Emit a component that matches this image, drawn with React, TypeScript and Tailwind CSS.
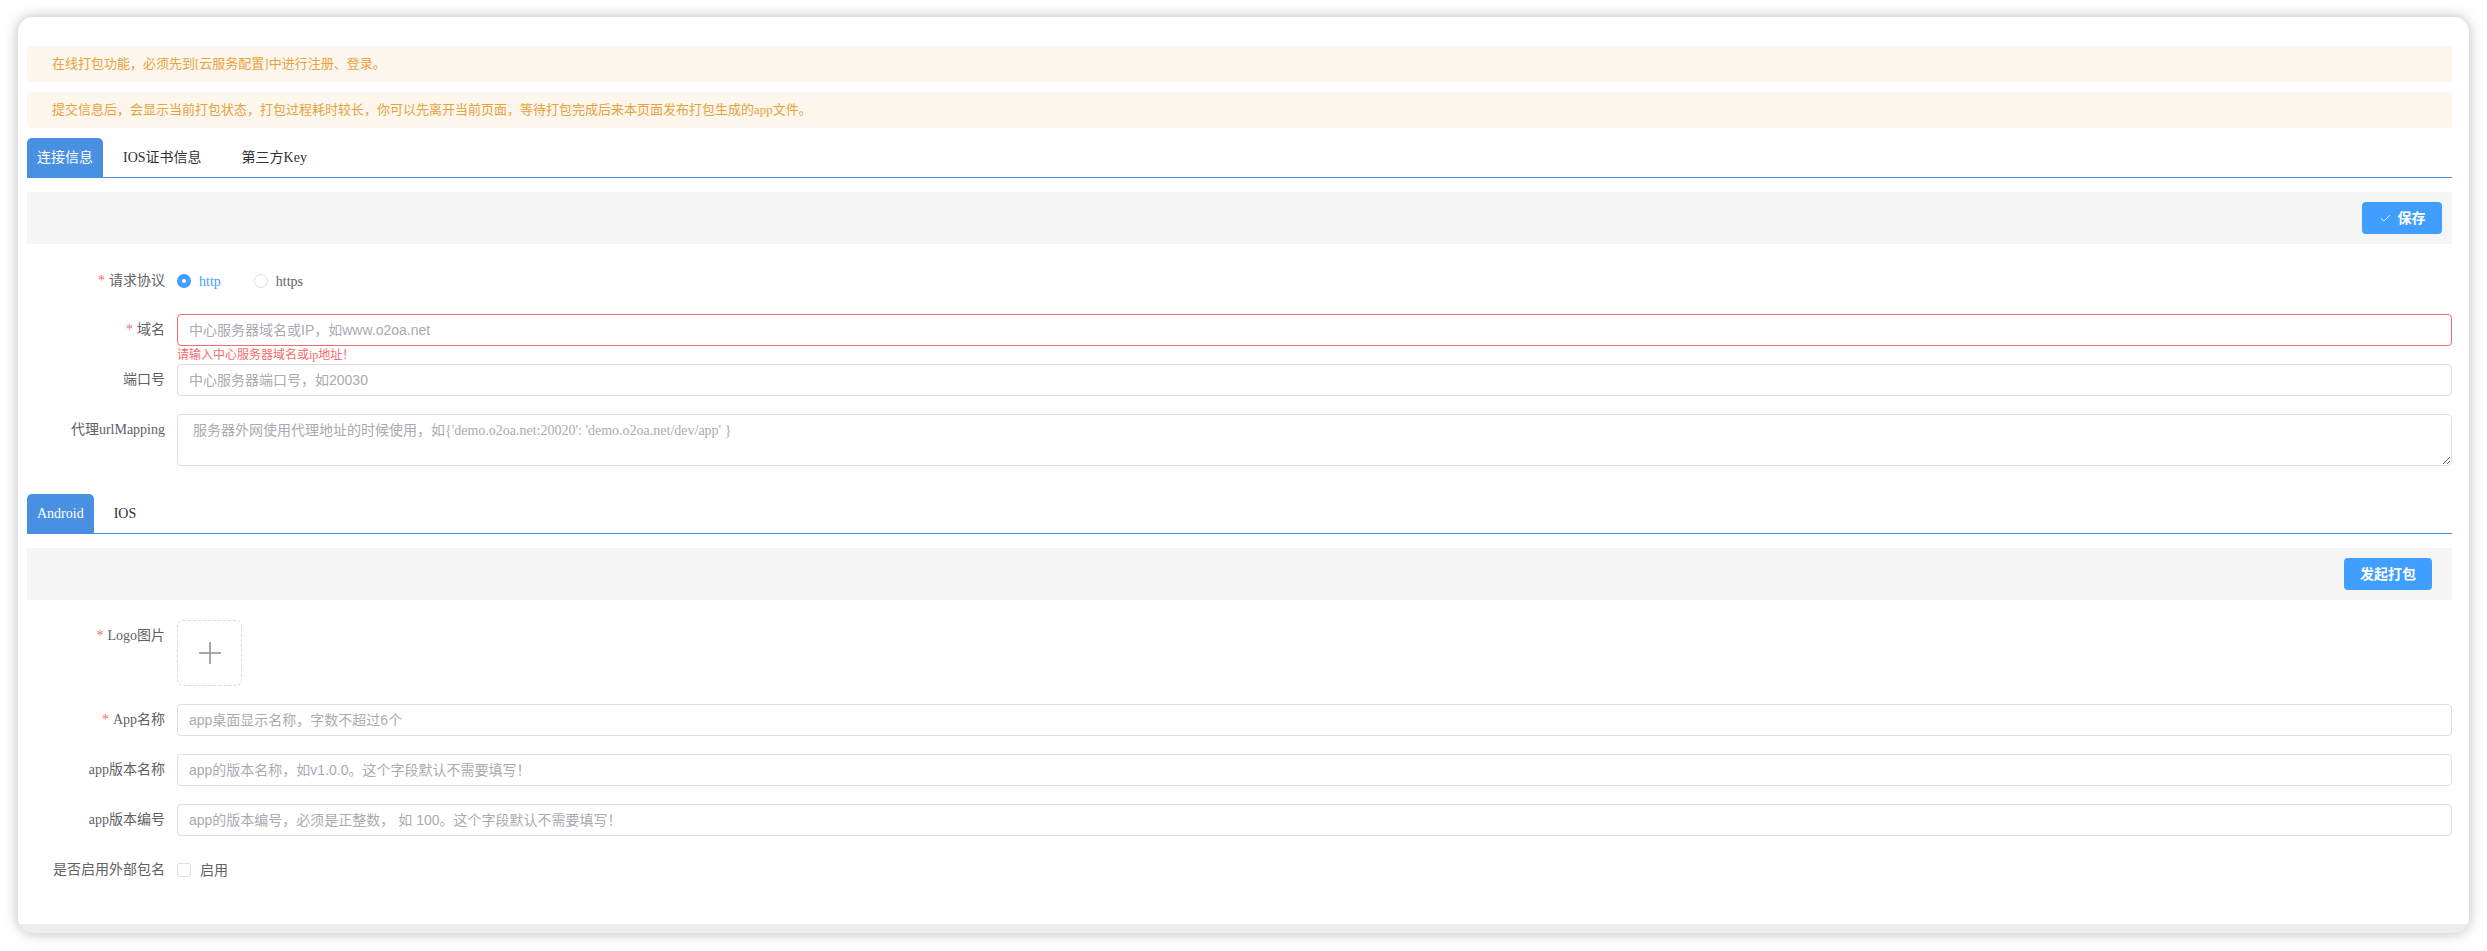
import { Check } from "lucide-react"

const serif = "font-['Liberation_Serif','Noto_Sans_CJK_SC',serif]"
const sans = "font-['Liberation_Sans','Noto_Sans_CJK_SC',sans-serif]"

function Label({ text, required }: { text: string; required?: boolean }) {
  return (
    <div className={`w-[150px] shrink-0 pr-[12px] text-right text-[14px] leading-[32px] text-[#606266] ${serif}`}>
      {required && <span className="mr-[4px] text-[#f56c6c]">*</span>}
      {text}
    </div>
  )
}

function TextInput({ placeholder, error }: { placeholder: string; error?: boolean }) {
  return (
    <input
      readOnly
      placeholder={placeholder}
      className={`h-[32px] w-full rounded-[4px] border bg-white px-[11px] text-[14px] text-[#606266] outline-none placeholder:text-[#a8abb2] ${sans} ${
        error ? "border-[#f56c6c]" : "border-[#dcdfe6]"
      }`}
    />
  )
}

function Tabs({ items, active }: { items: string[]; active: number }) {
  return (
    <div className={`flex h-[40px] items-end border-b border-[#4a90e2] text-[14px] ${serif}`}>
      {items.map((t, i) =>
        i === active ? (
          <div key={t} className="flex h-[39px] items-center rounded-t-[5px] bg-[#4a90e2] px-[10px] text-white">
            {t}
          </div>
        ) : (
          <div key={t} className="flex h-[39px] items-center px-[20px] text-[#303133]">
            {t}
          </div>
        )
      )}
    </div>
  )
}

function Radio({ label, checked }: { label: string; checked?: boolean }) {
  return (
    <div className="mr-[33px] flex items-center gap-[8px]">
      {checked ? (
        <span className="flex h-[14px] w-[14px] items-center justify-center rounded-full bg-[#409eff]">
          <span className="h-[4px] w-[4px] rounded-full bg-white" />
        </span>
      ) : (
        <span className="h-[14px] w-[14px] rounded-full border border-[#dcdfe6] bg-white" />
      )}
      <span className={`text-[14px] ${checked ? "text-[#409eff]" : "text-[#606266]"} ${serif}`}>{label}</span>
    </div>
  )
}

export default function App() {
  return (
    <div className="h-screen w-full bg-white px-[18px] pb-[18px] pt-[17px]">
      <div className="flex h-full flex-col overflow-hidden rounded-[15px] bg-[#ededed] shadow-[0_0_14px_rgba(0,0,0,0.28)]">
        <div className="h-[907px] bg-white pl-[9px] pr-[17px] pt-[29px]">
          {/* notices */}
          <div className={`flex flex-col gap-[10px] text-[13px] text-[#e6a23c] ${serif}`}>
            <div className="flex h-[36px] items-center rounded-[4px] bg-[#fdf6ec] px-[25px]">
              在线打包功能，必须先到[云服务配置]中进行注册、登录。
            </div>
            <div className="flex h-[36px] items-center rounded-[4px] bg-[#fdf6ec] px-[25px]">
              提交信息后，会显示当前打包状态，打包过程耗时较长，你可以先离开当前页面，等待打包完成后来本页面发布打包生成的app文件。
            </div>
          </div>

          <div className="mt-[10px]">
            <Tabs items={["连接信息", "IOS证书信息", "第三方Key"]} active={0} />
          </div>

          <div className="mt-[14px] flex h-[52px] items-center justify-end bg-[#f5f5f5] pr-[10px]">
            <button className={`flex h-[32px] w-[80px] items-center justify-center gap-[6px] rounded-[4px] bg-[#409eff] text-[14px] font-bold text-white ${sans}`}>
              <Check className="h-[13px] w-[13px]" strokeWidth={1.5} />
              保存
            </button>
          </div>

          {/* connection form */}
          <div className="mt-[21px] flex flex-col">
            <div className="mb-[17px] flex items-center">
              <Label text="请求协议" required />
              <div className="flex h-[32px] items-center">
                <Radio label="http" checked />
                <Radio label="https" />
              </div>
            </div>
            <div className="flex">
              <Label text="域名" required />
              <div className="flex flex-1 flex-col">
                <TextInput placeholder="中心服务器域名或IP，如www.o2oa.net" error />
                <div className={`h-[18px] text-[12px] leading-[18px] text-[#f56c6c] ${serif}`}>请输入中心服务器域名或ip地址！</div>
              </div>
            </div>
            <div className="mb-[18px] flex">
              <Label text="端口号" />
              <div className="flex-1">
                <TextInput placeholder="中心服务器端口号，如20030" />
              </div>
            </div>
            <div className="flex">
              <Label text="代理urlMapping" />
              <textarea
                readOnly
                placeholder="服务器外网使用代理地址的时候使用，如{'demo.o2oa.net:20020': 'demo.o2oa.net/dev/app' }"
                className={`h-[52px] flex-1 rounded-[4px] border border-[#dcdfe6] px-[15px] py-[5px] text-[14px] leading-[22px] outline-none placeholder:text-[#a8abb2] ${serif}`}
              />
            </div>
          </div>

          <div className="mt-[28px]">
            <Tabs items={["Android", "IOS"]} active={0} />
          </div>

          <div className="mt-[14px] flex h-[52px] items-center justify-end bg-[#f5f5f5] pr-[20px]">
            <button className={`flex h-[32px] w-[88px] items-center justify-center rounded-[4px] bg-[#409eff] text-[14px] font-bold text-white ${sans}`}>
              发起打包
            </button>
          </div>

          {/* package form */}
          <div className="mt-[20px] flex flex-col">
            <div className="mb-[18px] flex">
              <Label text="Logo图片" required />
              <div className="flex h-[66px] w-[65px] items-center justify-center rounded-[6px] border border-dashed border-[#d9d9d9]">
                <svg width="24" height="24" viewBox="0 0 24 24" fill="none" stroke="#8c939d" strokeWidth="1.6">
                  <line x1="12" y1="1" x2="12" y2="23" />
                  <line x1="1" y1="12" x2="23" y2="12" />
                </svg>
              </div>
            </div>
            <div className="mb-[18px] flex">
              <Label text="App名称" required />
              <div className="flex-1">
                <TextInput placeholder="app桌面显示名称，字数不超过6个" />
              </div>
            </div>
            <div className="mb-[18px] flex">
              <Label text="app版本名称" />
              <div className="flex-1">
                <TextInput placeholder="app的版本名称，如v1.0.0。这个字段默认不需要填写！" />
              </div>
            </div>
            <div className="mb-[18px] flex">
              <Label text="app版本编号" />
              <div className="flex-1">
                <TextInput placeholder="app的版本编号，必须是正整数， 如 100。这个字段默认不需要填写！" />
              </div>
            </div>
            <div className="flex items-center">
              <Label text="是否启用外部包名" />
              <div className="flex h-[32px] items-center gap-[9px]">
                <span className="h-[14px] w-[14px] rounded-[2px] border border-[#dcdfe6] bg-white" />
                <span className={`text-[14px] text-[#606266] ${serif}`}>启用</span>
              </div>
            </div>
          </div>
        </div>
      </div>
    </div>
  )
}
